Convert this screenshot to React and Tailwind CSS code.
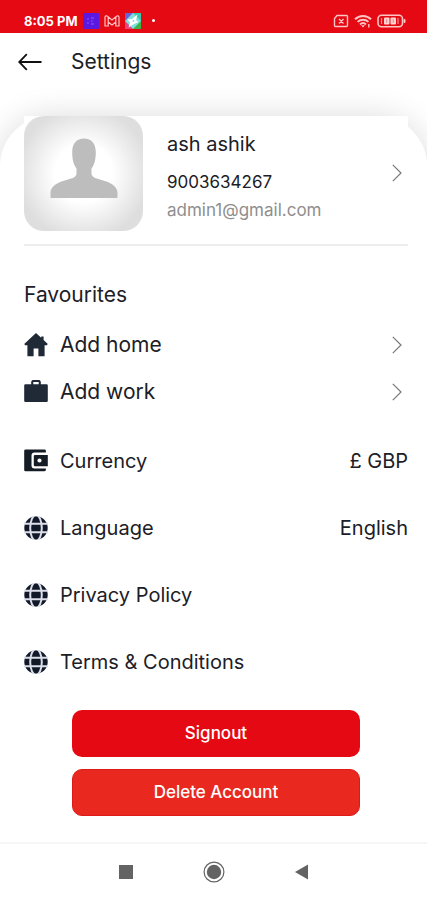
const Chevron = () => (
  <svg viewBox="0 0 10 18" className="mr-[6px] h-[18px] w-[10px] shrink-0" fill="none" stroke="#777" strokeWidth="1.2">
    <path d="M0.8 0.8 9 9 0.8 17.2" />
  </svg>
);

const HomeIcon = () => (
  <svg viewBox="0 0 24 24" className="h-6 w-6 shrink-0" fill="#1f2a36">
    <path d="M12 0 0.2 11 1.200 12.200H3.400V23.300H9.600V15.500H14.400V23.300H20.600V12.200H22.800L23.800 11 19.600 7.100V3.600H17.200V4.800Z" />
  </svg>
);

const WorkIcon = () => (
  <svg viewBox="0 0 24 24" className="h-6 w-6 shrink-0" fill="#1f2a36">
    <path
      fillRule="evenodd"
      d="M8.500 0h7l1.300 1.500V4.300H22.600a1.200 1.200 0 0 1 1.200 1.200v15.300a1.200 1.200 0 0 1-1.200 1.200H1.400a1.200 1.200 0 0 1-1.200-1.200V5.500A1.200 1.200 0 0 1 1.400 4.300h5.800V1.500ZM9.300 2V4.300h5.400V2Z"
    />
  </svg>
);

const WalletIcon = () => (
  <svg viewBox="0 0 24 24" className="h-6 w-6 shrink-0" fill="#141d26">
    <path d="M1.500 0.500h19a1.400 1.400 0 0 1 1.400 1.400V3.500H10.500a3 3 0 0 0-3 3v10a3 3 0 0 0 3 3h11.400v1.300a1.400 1.400 0 0 1-1.400 1.400H1.500A1.300 1.300 0 0 1 .2 20.900V1.800A1.300 1.300 0 0 1 1.500 0.500Z" />
    <path fillRule="evenodd" d="M11 6h12.800v11.200H11a1.200 1.200 0 0 1-1.200-1.200V7.200A1.200 1.200 0 0 1 11 6Zm4.500 3.400a2.100 2.100 0 1 0 0 4.200 2.100 2.100 0 0 0 0-4.200Z" />
  </svg>
);

const GlobeIcon = () => (
  <svg viewBox="0 0 24 24" className="h-6 w-6 shrink-0">
    <circle cx="12" cy="12" r="11.700" fill="#111827" />
    <g fill="none" stroke="#dcdfe9" strokeWidth="2">
      <ellipse cx="12" cy="12" rx="5.800" ry="13" />
      <path d="M0 7.800h24M0 16.200h24" />
    </g>
  </svg>
);

const Avatar = () => (
  <div className="flex h-[115px] w-[119px] shrink-0 justify-center rounded-[20px] bg-[radial-gradient(circle,#fff_35%,#dedede_80%)]">
    <svg viewBox="0 0 68 60" className="mt-[22px] h-[60px] w-[68px]" fill="#bdbdbd">
      <path d="M34 0.500C41.500 0.500 45.800 5.500 45.800 14.500C45.800 22 44 27.500 41.500 30.500V36C42 40 48 40.800 55 43C63 45.500 67.500 49.500 67.500 55V60H0.500V55C0.500 49.500 5 45.500 13 43C20 40.800 26 40 26.500 36V30.500C24 27.500 22.200 22 22.200 14.500C22.200 5.500 26.500 0.500 34 0.500Z" />
    </svg>
  </div>
);

const StatusBar = () => (
  <div className="relative z-10 flex h-[33px] items-center bg-[#e50914] pt-2 pr-[21px] pl-6 text-white">
    <span className="text-[13px] leading-4 font-bold">8:05 PM</span>
    <svg viewBox="0 0 16 16" className="ml-[5px] h-4 w-4">
      <rect width="16" height="16" rx="1" fill="#5b18e0" />
      <path d="M5 5v2M5 9v2M8 5h3M8 8h1.500M8 11h3" stroke="#8f5cf0" strokeWidth="1" fill="none" />
    </svg>
    <svg viewBox="0 0 16 16" className="ml-[5px] h-4 w-4" fill="none" stroke="#ffc4c4" strokeWidth="1.200">
      <path d="M1 13V4.200C1 2.800 2.500 2.500 3.500 3.300L8 7l4.500-3.700C13.500 2.500 15 2.800 15 4.200V13H11.800V9L8 12 4.200 9V13ZM4.200 9V4M11.800 9V4" />
    </svg>
    <svg viewBox="0 0 16 16" className="ml-[5px] h-4 w-4">
      <rect width="16" height="16" fill="#7fe0dc" />
      <path d="M0 0H8L0 8Z" fill="#6a62d8" />
      <path d="M8 0h8v8Z" fill="#3cc7a8" />
      <path d="M0 8l8 8H0Z" fill="#e8467c" />
      <path d="M16 8v8H8Z" fill="#3bb54a" />
      <path d="M12.500 1.500 11 7 13.500 9 9 11 3.500 14.500 5 9.500 2.500 6.500 7 6Z" fill="#fff" />
      <circle cx="8.500" cy="8" r="1" fill="#8fd8e8" />
    </svg>
    <span className="ml-[11px] h-[3px] w-[3px] rounded-full bg-white" />

    <svg viewBox="0 0 16 14" className="ml-auto h-[14px] w-4" fill="none" stroke="#ffc4c4" strokeWidth="1.400">
      <path d="M4 1.500h9.500a1 1 0 0 1 1 1v9a1 1 0 0 1-1 1h-11a1 1 0 0 1-1-1V4.500ZM6 5l4.500 4.500M10.500 5 6 9.500" />
    </svg>
    <svg viewBox="0 0 18 14" className="ml-[5px] h-[14px] w-[18px]" fill="none" stroke="#ffc4c4" strokeWidth="2">
      <path d="M1 5.200C5.500 0.800 12.500 0.800 17 5.200M3.600 7.900c3-2.900 7.800-2.900 10.800 0M6 10.400c1.700-1.500 4.300-1.500 6 0" />
      <path d="M7 11.300h4L9 13.500Z" fill="#ffc4c4" stroke="none" />
      <path d="M14.800 10v3.500" strokeWidth="1.400" />
    </svg>
    <svg viewBox="0 0 29 14" className="ml-[5px] h-[14px] w-[29px]">
      <rect x="1" y="1.200" width="24.500" height="11.600" rx="3.500" fill="none" stroke="#ffc4c4" strokeWidth="1.600" />
      <rect x="7" y="3.500" width="5.500" height="7" rx="1" fill="#ffd6d6" />
      <rect x="13.500" y="3.500" width="5.500" height="7" rx="1" fill="#ffd6d6" />
      <path d="M4.500 4v6M21 4v6" stroke="#f58a8a" strokeWidth="1.200" />
      <path d="M9.700 5.200v3.600M16.200 5.200v3.600" stroke="#f27d80" strokeWidth="1" />
      <rect x="26.500" y="5" width="2" height="4" rx="1" fill="#ffc4c4" />
    </svg>
  </div>
);

const favourites = [
  { label: "Add home", icon: HomeIcon },
  { label: "Add work", icon: WorkIcon },
];

const options = [
  { label: "Currency", icon: WalletIcon, value: "£ GBP" },
  { label: "Language", icon: GlobeIcon, value: "English" },
  { label: "Privacy Policy", icon: GlobeIcon },
  { label: "Terms & Conditions", icon: GlobeIcon },
];

const App = () => {
  return (
    <div className="flex min-h-screen flex-col overflow-hidden bg-white font-['Inter',sans-serif] text-[#1c2026]">
      <StatusBar />

      <header className="flex h-[58px] items-center pl-[18px]">
        <button type="button" aria-label="Back">
          <svg viewBox="0 0 24 18" className="h-[18px] w-6" fill="none" stroke="#111" strokeWidth="1.800">
            <path d="M23.500 9H1.500M8.800 1.200 1.200 9l7.600 7.800" />
          </svg>
        </button>
        <h1 className="ml-[29px] text-[21px] leading-7">Settings</h1>
      </header>

      <main className="mt-[25px] flex-1 rounded-t-[50px] bg-white pr-[19px] pl-6 shadow-[0_0_32px_rgba(0,0,0,0.14)]">
        <button type="button" className="flex h-[130px] w-full items-start border-b-2 border-[#ededed] bg-white text-left">
          <Avatar />
          <span className="ml-6 flex flex-1 flex-col pt-[14px]">
            <span className="text-xl leading-7">ash ashik</span>
            <span className="mt-3 text-[17px] leading-6">9003634267</span>
            <span className="mt-1 text-[17px] leading-6 text-[#8e8e8e]">admin1@gmail.com</span>
          </span>
          <span className="flex h-[113px] items-center">
            <Chevron />
          </span>
        </button>

        <h2 className="mt-[35px] text-[21px] leading-7">Favourites</h2>
        <div className="mt-3">
          {favourites.map(({ label, icon: Icon }) => (
            <button key={label} type="button" className="flex h-[47px] w-full items-center text-left">
              <Icon />
              <span className="ml-3 flex-1 text-[21px] leading-7">{label}</span>
              <Chevron />
            </button>
          ))}
        </div>

        <div className="mt-3">
          {options.map(({ label, icon: Icon, value }) => (
            <button key={label} type="button" className="flex h-[67px] w-full items-center text-left">
              <Icon />
              <span className="ml-3 flex-1 text-xl leading-7">{label}</span>
              {value && <span className="text-xl leading-7">{value}</span>}
            </button>
          ))}
        </div>

        <div className="mx-12 mt-[15px] flex flex-col gap-3 pb-6">
          <button type="button" className="h-[47px] rounded-[10px] bg-[#e50914] text-[17px] font-medium text-white">
            Signout
          </button>
          <button type="button" className="h-[47px] rounded-[10px] border border-[#dc1a18] bg-[#e9291f] text-[17px] font-medium text-white">
            Delete Account
          </button>
        </div>
      </main>

      <nav className="relative flex h-[58px] items-center justify-center gap-16 border-t-2 border-[#f6f6f6] bg-white">
        <button type="button" aria-label="Recent apps" className="flex h-6 w-6 items-center justify-center">
          <span className="h-[14px] w-[14px] bg-[#636363]" />
        </button>
        <button type="button" aria-label="Home">
          <svg viewBox="0 0 24 24" className="h-6 w-6">
            <circle cx="12" cy="12" r="9.900" fill="none" stroke="#636363" strokeWidth="1.200" />
            <circle cx="12" cy="12" r="7.200" fill="#636363" />
          </svg>
        </button>
        <button type="button" aria-label="Go back">
          <svg viewBox="0 0 24 24" className="h-6 w-6" fill="#636363">
            <path d="M5 12 18 4.500v15Z" />
          </svg>
        </button>
      </nav>
    </div>
  );
};

export default App;
